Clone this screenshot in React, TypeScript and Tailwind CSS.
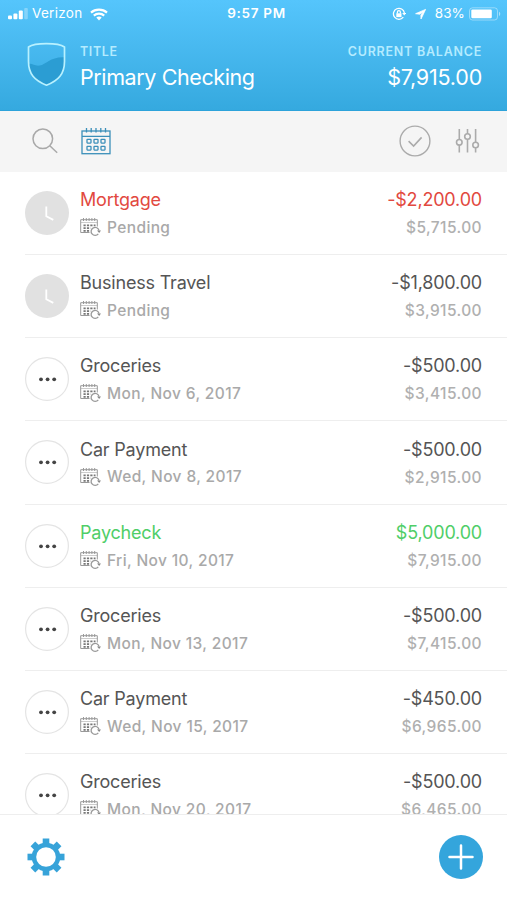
import clsx from "clsx";

type Transaction = {
  id: number;
  name: string;
  date: string;
  amount: string;
  balance: string;
  status: "pending" | "scheduled";
  tone?: "red" | "green";
};

const transactions: Transaction[] = [
  { id: 1, name: "Mortgage", date: "Pending", amount: "-$2,200.00", balance: "$5,715.00", status: "pending", tone: "red" },
  { id: 2, name: "Business Travel", date: "Pending", amount: "-$1,800.00", balance: "$3,915.00", status: "pending" },
  { id: 3, name: "Groceries", date: "Mon, Nov 6, 2017", amount: "-$500.00", balance: "$3,415.00", status: "scheduled" },
  { id: 4, name: "Car Payment", date: "Wed, Nov 8, 2017", amount: "-$500.00", balance: "$2,915.00", status: "scheduled" },
  { id: 5, name: "Paycheck", date: "Fri, Nov 10, 2017", amount: "$5,000.00", balance: "$7,915.00", status: "scheduled", tone: "green" },
  { id: 6, name: "Groceries", date: "Mon, Nov 13, 2017", amount: "-$500.00", balance: "$7,415.00", status: "scheduled" },
  { id: 7, name: "Car Payment", date: "Wed, Nov 15, 2017", amount: "-$450.00", balance: "$6,965.00", status: "scheduled" },
  { id: 8, name: "Groceries", date: "Mon, Nov 20, 2017", amount: "-$500.00", balance: "$6,465.00", status: "scheduled" },
];

const StatusBar = () => (
  <div className="grid h-7 grid-cols-3 items-center pr-1.5 pl-2 text-[13.5px] leading-none">
    <div className="flex items-center">
      <svg width="20" height="12" viewBox="0 0 20 12" fill="white">
        <rect x="0" y="7.5" width="4" height="3.8" rx="1" />
        <rect x="5.4" y="5.5" width="4" height="5.8" rx="1" />
        <rect x="10.8" y="2.5" width="4" height="8.8" rx="1" />
        <rect x="16.2" y="0" width="3.6" height="11.3" rx="1" opacity="0.3" />
      </svg>
      <span className="ml-1 tracking-[0.3px]">Verizon</span>
      <svg className="ml-[7px]" width="18" height="13" viewBox="0 0 18 13" fill="none" stroke="white" strokeWidth="2.2">
        <path d="M1 4.6C5.4.6 12.6.6 17 4.6" />
        <path d="M3.8 7.6C6.7 5 11.3 5 14.2 7.6" />
        <path d="M6.3 9.6C7.8 8.2 10.2 8.2 11.7 9.6L9 12.4z" fill="white" stroke="none" />
      </svg>
    </div>
    <span className="pl-1 text-center font-semibold tracking-[0.7px]">9:57 PM</span>
    <div className="flex items-center justify-end">
      <svg width="14" height="14" viewBox="0 0 14 14" fill="none" stroke="white" strokeWidth="1.3">
        <path d="M11.3 10.2A5.5 5.5 0 1 1 12.4 6" />
        <path d="M10.2 6h4l-2 2.6z" fill="white" stroke="none" />
        <rect x="4.3" y="6.3" width="5.2" height="3.8" fill="white" stroke="none" />
        <path d="M5.4 6.4V5.2a1.5 1.5 0 0 1 3 0v1.2" />
      </svg>
      <svg className="ml-2" width="13" height="13" viewBox="0 0 13 13" fill="white" stroke="white" strokeWidth="0.8" strokeLinejoin="round">
        <path d="M11.6 1.4L1.6 5.7L5.8 6.2L9.3 3.7L6.9 7.2L7 11z" />
      </svg>
      <span className="ml-2 tracking-[0.1px]">83%</span>
      <svg className="ml-1" width="32" height="14" viewBox="0 0 32 14">
        <rect x="0.5" y="0.8" width="28" height="12.2" rx="3" fill="none" stroke="white" strokeOpacity="0.4" />
        <rect x="2.3" y="2.5" width="20.5" height="8.8" rx="1.2" fill="white" />
        <path d="M30 4.8c1.7.6 1.7 3.6 0 4.2z" fill="white" opacity="0.5" />
      </svg>
    </div>
  </div>
);

const ShieldIcon = () => (
  <svg width="40" height="46" viewBox="0 0 40 46" fill="none">
    <path d="M1.8 22c3.6-.8 5.7 2.4 11 1.6C19 22.6 24 14.5 37.6 15.4c.3 14.6-3.5 22.5-18 27.500C7.500 38.800 2.200 33 1.800 22z" fill="#2b9dd3" />
    <path
      d="M1.5 5C8 .6 31 .6 37.5 5V19.5c0 12.4-6 19-18 23.7C7.5 38.5 1.5 31.9 1.5 19.5z"
      stroke="#b8f1ff"
      strokeWidth="1.7"
      strokeLinejoin="round"
    />
  </svg>
);

const CalendarIcon = () => (
  <svg width="30" height="28" viewBox="0 0 30 28" fill="none" stroke="#3b8fb9" strokeWidth="1.3">
    <rect x="1" y="4" width="28" height="22.7" />
    <path d="M1 9.3h28M5.5 1v4.6M10.2 1v4.6M15 1v4.6M19.8 1v4.6M24.5 1v4.6" />
    <rect x="6" y="12.3" width="4" height="3.8" rx="0.5" />
    <rect x="13" y="12.3" width="4" height="3.8" rx="0.5" />
    <rect x="20" y="12.3" width="4" height="3.8" rx="0.5" />
    <rect x="6" y="19.3" width="4" height="3.8" rx="0.5" />
    <rect x="13" y="19.3" width="4" height="3.8" rx="0.5" />
    <rect x="20" y="19.3" width="4" height="3.8" rx="0.5" />
  </svg>
);

const RecurringIcon = () => (
  <svg className="mb-px shrink-0" width="21" height="20" viewBox="0 0 21 20" fill="none" stroke="#999" strokeWidth="1">
    <path d="M9.5 15.5H0.7V2.7H17.3V9.5" />
    <path d="M1 5.5h16.3" strokeOpacity="0.5" />
    <path d="M3.5 1v3M6.3 1v3M9.1 1v3M11.9 1v3M14.7 1v3" />
    <path d="M3.5 8.3h12M3.5 11.2h7M3.5 13.8h6" stroke="#777" strokeWidth="1.8" strokeDasharray="2.2 1.2" />
    <path d="M18.3 16.8A4 4 0 1 1 19 13.5" strokeWidth="1.3" />
    <path d="M17 13.5h4l-1.8 2.6z" fill="#888" stroke="none" />
  </svg>
);

const Toolbar = () => (
  <div className="flex h-[61px] items-center justify-between bg-[#f5f5f5] pr-[27px] pb-0.5 pl-8">
    <div className="flex items-center gap-[23px]">
      <svg width="26" height="26" viewBox="0 0 26 26" fill="none" stroke="#a9a9a9" strokeWidth="1.5">
        <circle cx="10.8" cy="10.8" r="9.8" />
        <path d="M17.8 17.8l7.4 7" />
      </svg>
      <CalendarIcon />
    </div>
    <div className="flex items-center gap-6">
      <svg width="32" height="32" viewBox="0 0 32 32" fill="none" stroke="#ababab" strokeWidth="1.4">
        <circle cx="16" cy="16" r="14.9" />
        <path d="M9.6 16.2l5 4.8 8-8.6" strokeWidth="1.6" />
      </svg>
      <svg width="25" height="26" viewBox="0 0 25 26" fill="none" stroke="#ababab" strokeWidth="1.6">
        <path d="M4.3 1v10.5M4.3 17v7.5M12.5 1v4.8M12.5 11.3v13.2M20.6 1v13.3M20.6 19.8v4.7" />
        <circle cx="4.3" cy="14.3" r="2.8" />
        <circle cx="12.5" cy="8.5" r="2.8" />
        <circle cx="20.6" cy="17" r="2.8" />
      </svg>
    </div>
  </div>
);

const StatusIcon = ({ status }: { status: Transaction["status"] }) => {
  if (status === "pending") {
    return (
      <svg width="44" height="44" viewBox="0 0 44 44" fill="none">
        <circle cx="22" cy="22" r="22" fill="#e1e1e1" />
        <path d="M21.3 15.5v9.8l7 3.6" stroke="white" strokeWidth="1.8" />
      </svg>
    );
  }

  return (
    <svg width="44" height="44" viewBox="0 0 44 44">
      <circle cx="22" cy="22" r="21.4" fill="white" stroke="#e4e4e4" strokeWidth="1.2" />
      <g fill="#444">
        <circle cx="16" cy="22.3" r="1.9" />
        <circle cx="22.6" cy="22.3" r="1.9" />
        <circle cx="29.2" cy="22.3" r="1.9" />
      </g>
    </svg>
  );
};

const TransactionRow = ({ transaction }: { transaction: Transaction }) => {
  const { name, date, amount, balance, status, tone } = transaction;
  const color = clsx(
    tone === "red" && "text-[#e2493f]",
    tone === "green" && "text-[#4fce68]",
    !tone && "text-[#555]"
  );

  return (
    <li className="ml-[25px] flex h-[83.15px] shrink-0 items-center border-b border-[#eeeeee] pr-[25px]">
      <StatusIcon status={status} />
      <div className="ml-[11px] flex-1 pt-[1.2px]">
        <p className={clsx("text-[18px] leading-7 tracking-[-0.2px]", color)}>{name}</p>
        <div className="flex h-[27px] items-center">
          <RecurringIcon />
          <span className="ml-1.5 text-[15.5px] font-medium tracking-[0.38px] text-[#a9a9a9]">{date}</span>
        </div>
      </div>
      <div className="pt-[1.2px] text-right">
        <p className={clsx("text-[18px] leading-7 tracking-[-0.18px]", color)}>{amount}</p>
        <p className="text-[15.5px] leading-[27px] font-medium tracking-[0.4px] text-[#b0b0b0]">{balance}</p>
      </div>
    </li>
  );
};

const GearIcon = () => (
  <svg width="38" height="38" viewBox="-19 -19 38 38" fill="#37a3d9">
    {[0, 45, 90, 135].map((angle) => (
      <rect key={angle} x="-3.3" y="-18.5" width="6.6" height="37" transform={`rotate(${angle})`} />
    ))}
    <circle r="14.3" />
    <circle r="9.8" fill="white" />
  </svg>
);

export default function App() {
  return (
    <div className="flex h-[900px] w-[507px] flex-col overflow-hidden bg-white font-['Inter',sans-serif]">
      <header className="h-[111px] shrink-0 border-b border-[#2da3da] bg-linear-to-b from-[#55c5fc] to-[#35a9df] text-white">
        <StatusBar />
        <div className="flex items-start pt-[14px] pr-[25px] pl-[27px]">
          <ShieldIcon />
          <div className="ml-[13px] flex-1">
            <p className="text-[12.5px] leading-5 font-semibold tracking-[0.6px] text-[#b4ebff]">TITLE</p>
            <p className="text-[21.5px] leading-[30px] tracking-[-0.4px]">Primary Checking</p>
          </div>
          <div className="text-right">
            <p className="text-[12.5px] leading-5 font-semibold tracking-[0.75px] text-[#b4ebff]">CURRENT BALANCE</p>
            <p className="text-[21.5px] leading-[30px] tracking-[-0.2px]">$7,915.00</p>
          </div>
        </div>
      </header>
      <Toolbar />
      <ul className="flex min-h-0 flex-1 flex-col overflow-hidden">
        {transactions.map((transaction) => (
          <TransactionRow key={transaction.id} transaction={transaction} />
        ))}
      </ul>
      <footer className="flex h-[86px] shrink-0 items-center justify-between border-t border-[#eeeeee] pr-6 pb-px pl-[27px]">
        <GearIcon />
        <svg width="44" height="44" viewBox="0 0 44 44" fill="none">
          <circle cx="22" cy="22" r="22" fill="#34a5dc" />
          <path d="M22 10.5v23M10.5 22h23" stroke="white" strokeWidth="2.5" strokeLinecap="round" />
        </svg>
      </footer>
    </div>
  );
}
